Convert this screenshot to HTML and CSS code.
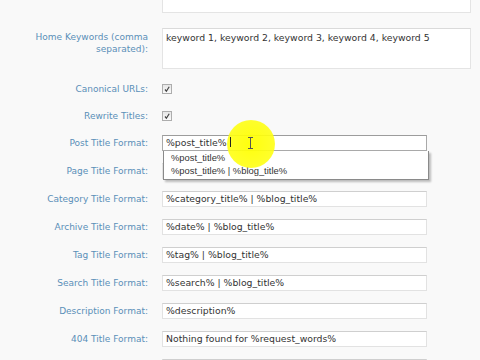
FILE: index.html
```
<!DOCTYPE html>
<html lang="en">
<head>
	<meta charset="UTF-8">
	<meta name="viewport" content="width=device-width, initial-scale=1.0">
	<title>SEO Options</title>
	<link rel="stylesheet" href="styles.css">
</head>
<body>
	<div class="form">
		<div class="row tall">
			<label class="lbl"></label>
			<div class="area big"></div>
		</div>
		<div class="row tall keywords">
			<label class="lbl">Home Keywords (comma separated):</label>
			<div class="area">keyword 1, keyword 2, keyword 3, keyword 4, keyword 5</div>
		</div>
		<div class="row short">
			<label class="lbl">Canonical URLs:</label>
			<span class="check"><svg viewBox="0 0 10 10" width="10" height="10"><path d="M3 5.5 L4.4 7.2 L7.2 2.8" fill="none" stroke="#444" stroke-width="1.2"/></svg></span>
		</div>
		<div class="row short">
			<label class="lbl">Rewrite Titles:</label>
			<span class="check"><svg viewBox="0 0 10 10" width="10" height="10"><path d="M3 5.5 L4.4 7.2 L7.2 2.8" fill="none" stroke="#444" stroke-width="1.2"/></svg></span>
		</div>
		<div class="row">
			<label class="lbl">Post Title Format:</label>
			<div class="field focus">%post_title% <span class="caret"></span>
				<ul class="suggest">
					<li>%post_title%</li>
					<li>%post_title% | %blog_title%</li>
				</ul>
				<span class="spot"></span>
				<span class="ibeam"></span>
			</div>
		</div>
		<div class="row">
			<label class="lbl">Page Title Format:</label>
			<div class="field"></div>
		</div>
		<div class="row">
			<label class="lbl">Category Title Format:</label>
			<div class="field">%category_title% | %blog_title%</div>
		</div>
		<div class="row">
			<label class="lbl">Archive Title Format:</label>
			<div class="field">%date% | %blog_title%</div>
		</div>
		<div class="row">
			<label class="lbl">Tag Title Format:</label>
			<div class="field">%tag% | %blog_title%</div>
		</div>
		<div class="row">
			<label class="lbl">Search Title Format:</label>
			<div class="field">%search% | %blog_title%</div>
		</div>
		<div class="row">
			<label class="lbl">Description Format:</label>
			<div class="field">%description%</div>
		</div>
		<div class="row">
			<label class="lbl">404 Title Format:</label>
			<div class="field">Nothing found for %request_words%</div>
		</div>
		<div class="row">
			<label class="lbl"></label>
			<div class="field"></div>
		</div>
	</div>
</body>
</html>
```

FILE: styles.css
```
* {
	margin: 0;
	padding: 0;
	box-sizing: border-box;
}

body {
	background: #f9f9f9;
	font-family: "DejaVu Sans", Verdana, sans-serif;
	font-size: 9px;
	color: #333;
	overflow: hidden;
	height: 360px;
}

.form {
	margin-top: -27px;
}

.row {
	display: grid;
	grid-template-columns: 148px 1fr;
	column-gap: 14px;
	align-items: center;
	height: 28px;
}

.row.short {
	height: 27px;
}

.row.tall {
	height: auto;
	align-items: start;
}

.keywords {
	margin-top: 15px;
	margin-bottom: 6px;
}

.lbl {
	text-align: right;
	color: #5a8fb8;
	line-height: 12px;
}

.keywords .lbl {
	padding-top: 3px;
	padding-left: 30px;
}

.area {
	width: 309px;
	height: 41px;
	background: #fff;
	border: 1px solid #e4e4e4;
	border-top-color: #dadada;
	padding: 3px 3px;
	line-height: 12px;
	font-size: 9.3px;
}

.area.big {
	height: 40px;
}

.check {
	width: 10px;
	height: 10px;
	border: 1px solid #adadad;
	background: linear-gradient(#e6e6e6, #fafafa);
	display: flex;
}

.check svg {
	margin: -1px;
}

.field {
	position: relative;
	width: 265px;
	height: 16px;
	background: #fff;
	border: 1px solid #e2e2e2;
	border-top-color: #cfcfcf;
	padding: 0 3px;
	line-height: 14px;
	white-space: nowrap;
	font-size: 9.3px;
}

.field.focus {
	border-color: #a9a9a9;
	border-top-color: #9c9c9c;
}

.caret {
	position: relative;
	z-index: 4;
	display: inline-block;
	width: 1px;
	height: 10px;
	background: #222;
	vertical-align: -1px;
}

.suggest {
	position: absolute;
	left: 0;
	top: 15px;
	width: 266px;
	list-style: none;
	background: #fff;
	border: 1px solid #8a8a8a;
	border-top: none;
	box-shadow: 2px 2px 2px rgba(0, 0, 0, 0.25);
	padding: 0 0 2px;
	font-family: "Liberation Sans", Arial, sans-serif;
	font-size: 9.4px;
	line-height: 13px;
	z-index: 2;
}

.suggest li {
	padding-left: 7px;
}

.spot {
	position: absolute;
	left: 64px;
	top: -16px;
	width: 48px;
	height: 48px;
	border-radius: 50%;
	background: radial-gradient(circle, rgba(255, 255, 0, 0.95) 0%, rgba(255, 255, 20, 0.9) 68%, rgba(255, 255, 80, 0) 100%);
	z-index: 3;
}

.ibeam {
	position: absolute;
	left: 85px;
	top: 1px;
	width: 5px;
	height: 12px;
	border-top: 1px solid #555;
	border-bottom: 1px solid #555;
	z-index: 4;
}

.ibeam::after {
	content: "";
	position: absolute;
	left: 2px;
	top: 0;
	width: 1px;
	height: 10px;
	background: #555;
}
```
